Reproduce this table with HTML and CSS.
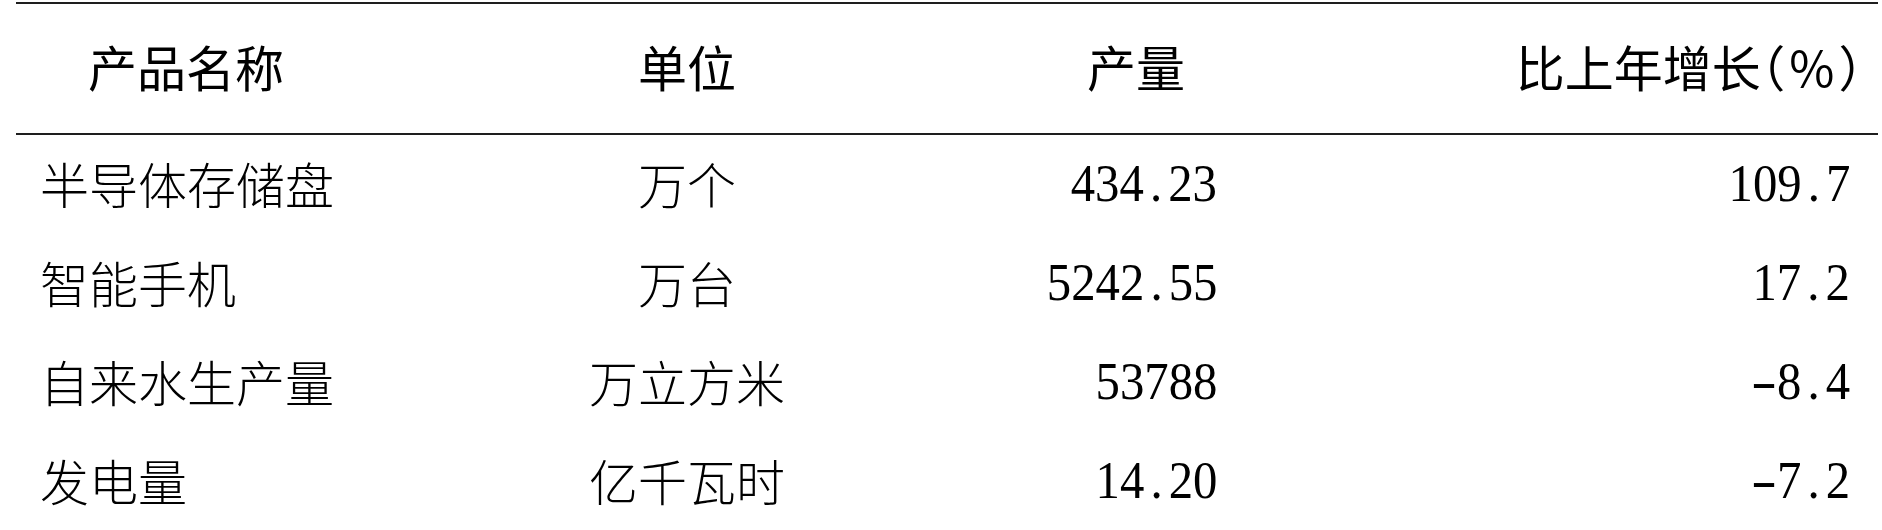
FILE: index.html
```html
<!DOCTYPE html>
<html lang="zh-CN">
<head>
<meta charset="utf-8">
<title>主要工业产品产量</title>
<link rel="stylesheet" href="styles.css">
</head>
<body>
<div class="table">
  <div class="row head">
    <div class="cell c1">产品名称</div>
    <div class="cell c2">单位</div>
    <div class="cell c3">产量</div>
    <div class="cell c4">比上年增长<span class="pct">（%）</span></div>
  </div>
  <div class="row">
    <div class="cell c1">半导体存储盘</div>
    <div class="cell c2">万个</div>
    <div class="cell c3"><span class="num">434<span class="dot">.</span>23</span></div>
    <div class="cell c4"><span class="num">109<span class="dot">.</span>7</span></div>
  </div>
  <div class="row">
    <div class="cell c1">智能手机</div>
    <div class="cell c2">万台</div>
    <div class="cell c3"><span class="num">5242<span class="dot">.</span>55</span></div>
    <div class="cell c4"><span class="num">17<span class="dot">.</span>2</span></div>
  </div>
  <div class="row">
    <div class="cell c1">自来水生产量</div>
    <div class="cell c2">万立方米</div>
    <div class="cell c3"><span class="num">53788</span></div>
    <div class="cell c4"><span class="num"><span class="minus">-</span>8<span class="dot">.</span>4</span></div>
  </div>
  <div class="row">
    <div class="cell c1">发电量</div>
    <div class="cell c2">亿千瓦时</div>
    <div class="cell c3"><span class="num">14<span class="dot">.</span>20</span></div>
    <div class="cell c4"><span class="num"><span class="minus">-</span>7<span class="dot">.</span>2</span></div>
  </div>
</div>
</body>
</html>
```
FILE: styles.css
```css
html, body {
  margin: 0;
  padding: 0;
  background: #ffffff;
}

body {
  font-family: "Noto Sans CJK SC", "Noto Sans", sans-serif;
  color: #000000;
  overflow: hidden;
}

.table {
  margin: 2px 4px 0 16px;
  border-top: 2px solid #1e1e1e;
}

.row {
  display: grid;
  grid-template-columns: 474px 394px 356px 638px;
  box-sizing: border-box;
  height: 99px;
  padding-bottom: 5px;
  align-items: center;
  font-size: 49px;
  font-weight: 300;
  line-height: 1;
}

.row.head {
  height: 131px;
  padding-bottom: 6px;
  border-bottom: 2px solid #1e1e1e;
  font-weight: 400;
  font-feature-settings: "halt";
}

.cell {
  white-space: nowrap;
}

.c1 {
  text-align: left;
  padding-left: 24px;
}

.head .c1 {
  padding-left: 72px;
}

.c2 {
  text-align: center;
}

.c3 {
  text-align: right;
  padding-right: 23px;
}

.head .c3 {
  padding-right: 55px;
}

.c4 {
  text-align: right;
  padding-right: 28px;
}

.head .c4 {
  padding-right: 15px;
}

.pct {
  letter-spacing: 4px;
  margin-right: -4px;
}

.num {
  display: inline-block;
  font-family: "Liberation Serif", "Times New Roman", serif;
  font-size: 53px;
  font-weight: 400;
  line-height: 1;
  transform: scaleX(0.92);
  transform-origin: right center;
}

.dot {
  display: inline-block;
  width: 0.5em;
  text-align: center;
}

.minus {
  display: inline-block;
  transform: scaleX(1.6);
  transform-origin: right center;
}
```
